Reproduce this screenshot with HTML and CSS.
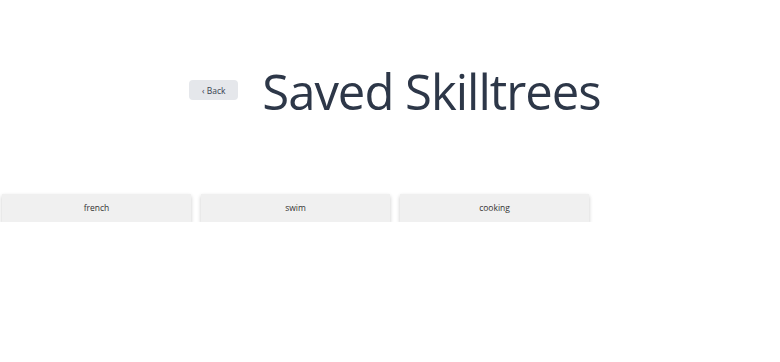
FILE: index.html
```html
<!DOCTYPE html>
<html lang="en">
<head>
    <meta charset="UTF-8">
    <meta name="viewport" content="width=device-width, initial-scale=1.0">
    <title>Saved Skilltrees</title>
    <link rel="stylesheet" href="styles.css">
</head>
<body>
    <div class="header">
        <button class="btn-back">&lsaquo; Back</button>
        <h1>Saved Skilltrees</h1>
    </div>

    <div class="tree-list">
        <div class="tree-card">french</div>
        <div class="tree-card">swim</div>
        <div class="tree-card">cooking</div>
    </div>
</body>
</html>
```

FILE: styles.css
```css
body {
    margin: 0;
    font-family: "Open Sans", "Noto Sans", sans-serif;
    background: #fff;
    color: #2d3748;
}
.header {
    display: flex;
    justify-content: center;
    align-items: center;
    gap: 24px;
    padding-top: 60px;
    padding-left: 10px;
    height: 62px;
}
h1 {
    margin: 0;
    font-size: 49px;
    font-weight: 400;
    letter-spacing: -1px;
    line-height: 62px;
    color: #2d3748;
}
.btn-back {
    font-family: inherit;
    font-size: 8.5px;
    color: #374151;
    background: #e5e7eb;
    border: none;
    border-radius: 4px;
    width: 49px;
    height: 20px;
    padding: 0;
    margin-top: -2px;
    cursor: pointer;
}
.tree-list {
    display: flex;
    gap: 10px;
    margin-top: 72px;
    padding-left: 2px;
}
.tree-card {
    width: 189px;
    height: 28px;
    line-height: 28px;
    text-align: center;
    font-size: 8.5px;
    color: #333;
    background: #f0f0f0;
    box-shadow: 0 2px 4px rgba(0, 0, 0, 0.22);
}
```
